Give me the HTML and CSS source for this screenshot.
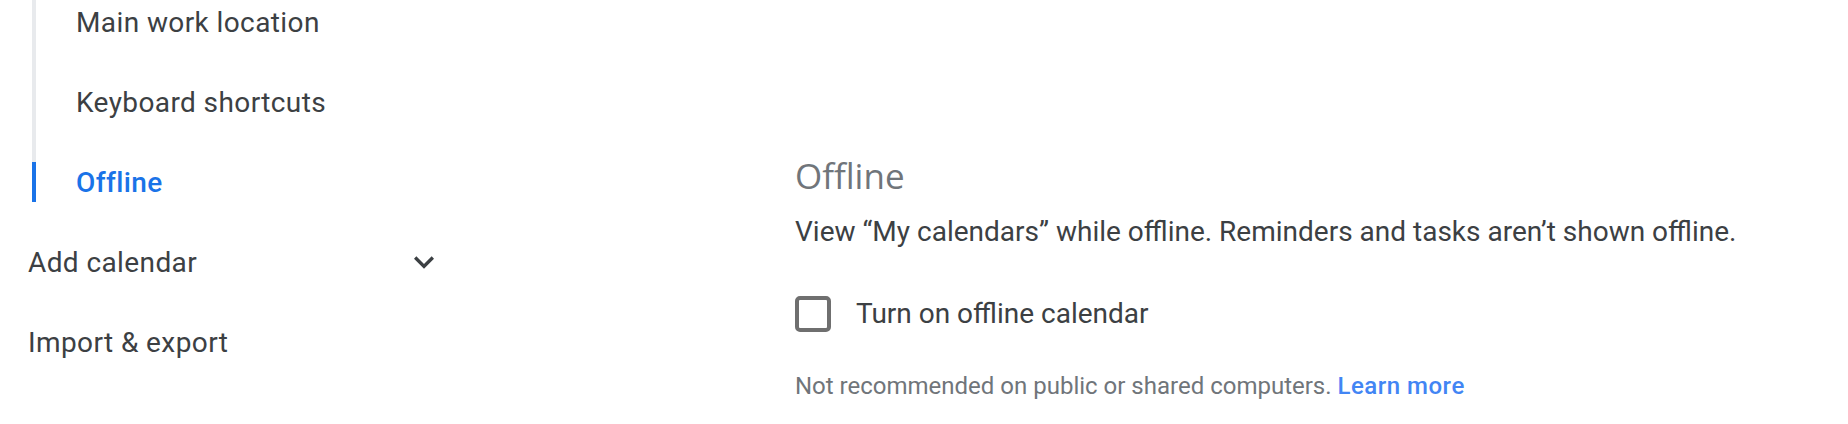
FILE: index.html
```html
<!DOCTYPE html>
<html lang="en">
<head>
  <meta charset="UTF-8">
  <meta name="viewport" content="width=device-width, initial-scale=1.0">
  <title>Settings - Offline</title>
  <link rel="stylesheet" href="styles.css">
</head>
<body>

  <div class="settings">
    <!-- Left navigation -->
    <nav class="side-nav">
      <ul class="sub-nav">
        <li class="sub-item">Main work location</li>
        <li class="sub-item">Keyboard shortcuts</li>
        <li class="sub-item active">Offline</li>
      </ul>
      <div class="nav-item">
        <span>Add calendar</span>
        <svg class="chevron" viewBox="0 0 24 24" width="40" height="40">
          <path d="M16.59 8.59L12 13.17 7.41 8.59 6 10l6 6 6-6z"/>
        </svg>
      </div>
      <div class="nav-item">
        <span>Import &amp; export</span>
      </div>
    </nav>

    <!-- Offline section -->
    <main class="section">
      <h2 class="section-title">Offline</h2>
      <p class="section-desc">View “My calendars” while offline. Reminders and tasks aren’t shown offline.</p>
      <label class="check-row">
        <span class="checkbox"></span>
        <span>Turn on offline calendar</span>
      </label>
      <p class="note">Not recommended on public or shared computers. <a href="#" class="learn-more">Learn more</a></p>
    </main>
  </div>

</body>
</html>
```

FILE: styles.css
```css
/* Global */
body {
  margin: 0;
  background: #fff;
  font-family: Roboto, 'Liberation Sans', sans-serif;
  color: #3c4043;
  overflow: hidden;
}
.settings {
  display: flex;
  align-items: flex-start;
}

/* Side navigation */
.side-nav {
  width: 444px;
  flex: none;
  margin-top: -18px;
  font-size: 28px;
  letter-spacing: 0.4px;
}
.sub-nav {
  list-style: none;
  margin: 0 0 0 32px;
  padding: 0;
}
.sub-item {
  display: flex;
  align-items: center;
  height: 80px;
}
.sub-item::before {
  content: '';
  width: 4px;
  align-self: stretch;
  margin-right: 40px;
  background: #e8eaed;
}
.sub-item.active {
  color: #1a73e8;
  font-weight: 500;
}
.sub-item.active::before {
  background: linear-gradient(#e8eaed 0 20px, #1a73e8 20px 60px, transparent 60px);
}
.nav-item {
  display: flex;
  align-items: center;
  justify-content: space-between;
  height: 80px;
  padding-left: 28px;
}
.chevron {
  fill: #3c4043;
}

/* Offline section */
.section {
  padding: 154px 0 0 351px;
}
.section-title {
  margin: 0;
  font-family: 'Open Sans', Roboto, sans-serif;
  font-size: 35px;
  font-weight: 400;
  line-height: 44px;
  color: #70757a;
}
.section-desc {
  margin: 14px 0 0;
  font-size: 28px;
  line-height: 40px;
}
.check-row {
  display: flex;
  align-items: center;
  gap: 25px;
  margin-top: 42px;
  font-size: 28px;
  line-height: 40px;
}
.checkbox {
  width: 36px;
  height: 36px;
  box-sizing: border-box;
  border: 4px solid #6f6f6f;
  border-radius: 5px;
}
.note {
  margin: 36px 0 0;
  font-size: 24px;
  line-height: 32px;
  color: #70757a;
}
.learn-more {
  color: #4285f4;
  font-weight: 500;
  letter-spacing: 0.5px;
  text-decoration: none;
}
```
